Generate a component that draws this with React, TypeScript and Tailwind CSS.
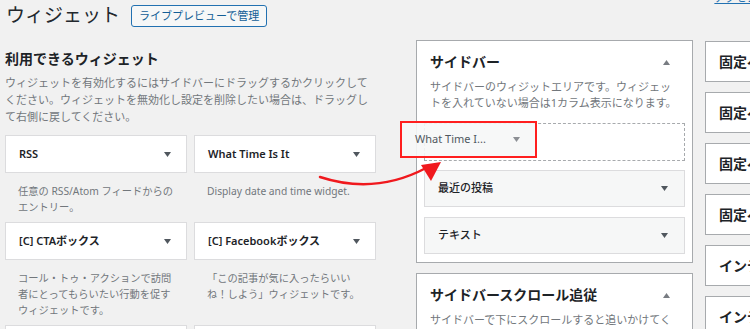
import type { ReactNode } from 'react';

const available = [
  { title: 'RSS', desc: '任意の RSS/Atom フィードからのエントリー。' },
  { title: 'What Time Is It', desc: 'Display date and time widget.' },
  { title: '[C] CTAボックス', desc: 'コール・トゥ・アクションで訪問者にとってもらいたい行動を促すウィジェットです。' },
  { title: '[C] Facebookボックス', desc: '「この記事が気に入ったらいいね！しよう」ウィジェットです。' },
  { title: '[C] PR表記', desc: '' },
  { title: '[C] SNSフォローボタン', desc: '' },
];

const areas = ['固定ページ上部', '固定ページ本文上', '固定ページ本文中', '固定ページ本文下', 'インデックスリストトップ', 'インデックスリスト中間'];

function Down({ color = '#50575e' }: { color?: string }) {
  return (
    <svg width="7" height="5" viewBox="0 0 7 5" className="shrink-0">
      <polygon points="0,0 7,0 3.5,5" fill={color} />
    </svg>
  );
}

function Up() {
  return (
    <svg width="7" height="5" viewBox="0 0 7 5" className="shrink-0">
      <polygon points="0,5 7,5 3.5,0" fill="#787c82" />
    </svg>
  );
}

function Panel({ title, desc, children }: { title: string; desc: string; children?: ReactNode }) {
  return (
    <div className="bg-white border border-[#a7aaad]">
      <div className="flex items-center justify-between pt-[11px] pl-[13px] pr-[22px]">
        <h3 className="text-[14px] leading-5 font-bold text-[#1d2327]">{title}</h3>
        <Up />
      </div>
      <p className="mt-[7px] pl-[13px] pr-[12px] text-[11px] leading-4 text-[#72777c]">{desc}</p>
      {children}
    </div>
  );
}

export default function App() {
  return (
    <div className="relative w-[750px] h-[329px] overflow-hidden bg-[#f1f1f1] font-['Noto_Sans','Noto_Sans_CJK_JP',sans-serif] text-[#1d2327]">
      <div className="flex h-10 items-start pl-[6px]">
        <h1 className="mt-[3px] shrink-0 whitespace-nowrap text-[19px] leading-6 text-[#23282d]">ウィジェット</h1>
        <button className="ml-[11px] mt-[5px] h-[22px] px-[7px] shrink-0 rounded-[3px] border border-[#2271b1] bg-[#f6f7f7] text-[11px] leading-5 text-[#135e96]">
          ライブプレビューで管理
        </button>
        <a className="ml-[447px] -mt-[9px] shrink-0 whitespace-nowrap text-[11px] leading-[14px] text-[#2271b1] underline">
          アクセシビリティモードを有効にする
        </a>
      </div>

      <div className="flex">
        <div className="ml-[5px] w-[371px] shrink-0">
          <h2 className="mt-[9px] text-[14px] leading-5 font-bold text-[#1d2327]">利用できるウィジェット</h2>
          <p className="mt-[5px] text-[11px] leading-[17px] text-[#72777c]">
            ウィジェットを有効化するにはサイドバーにドラッグするかクリックしてください。ウィジェットを無効化し設定を削除したい場合は、ドラッグして右側に戻してください。
          </p>
          <div className="mt-[10px] grid grid-cols-2 gap-x-[7px] gap-y-[7px]">
            {available.map((w) => (
              <div key={w.title}>
                <div className="flex h-[38px] items-center justify-between border border-[#dcdcde] bg-white pl-[13px] pr-[15px]">
                  <span className="text-[11px] font-semibold text-[#1d2327]">{w.title}</span>
                  <Down />
                </div>
                <p className="pt-[10px] pl-[13px] pr-[10px] text-[10.25px] leading-4 text-[#72777c]">{w.desc}</p>
              </div>
            ))}
          </div>
        </div>

        <div className="ml-[40px] w-[277px] shrink-0 flex flex-col gap-[10px]">
          <Panel title="サイドバー" desc="サイドバーのウィジットエリアです。ウィジェットを入れていない場合は1カラム表示になります。">
            <div className="mx-[7px] mt-[12px] h-[38px] border border-dashed border-[#a7aaad]" />
            <div className="mx-[7px] mt-[9px] flex h-[37px] items-center justify-between border border-[#dcdcde] bg-[#f6f7f7] pl-[13px] pr-[16px]">
              <span className="text-[11px] font-medium">最近の投稿</span>
              <Down />
            </div>
            <div className="mx-[7px] mt-[10px] mb-[8px] flex h-[37px] items-center justify-between border border-[#dcdcde] bg-[#f6f7f7] pl-[13px] pr-[16px]">
              <span className="text-[11px] font-medium">テキスト</span>
              <Down />
            </div>
          </Panel>
          <Panel title="サイドバースクロール追従" desc="サイドバーで下にスクロールすると追いかけてくるエリアです。" />
        </div>

        <div className="ml-[12px] w-[250px] shrink-0 flex flex-col gap-[10px] pt-[1px]">
          {areas.map((a) => (
            <div key={a} className="flex h-[41px] items-center border border-[#a7aaad] bg-white pl-[13px]">
              <span className="whitespace-nowrap text-[14px] font-bold text-[#1d2327]">{a}</span>
            </div>
          ))}
        </div>
      </div>

      {/* dragged widget */}
      <div className="absolute left-[400px] top-[121px] w-[137px] h-[37px] border-2 border-[#ff1f1f] bg-[#f6f7f7]/90 flex items-center justify-between pl-[13px] pr-[15px]">
        <span className="text-[11px] text-[#50575e]">What Time I...</span>
        <Down color="#8c8f94" />
      </div>

      <svg className="pointer-events-none absolute left-0 top-0" width="750" height="329" viewBox="0 0 750 329">
        <path d="M320 177 Q375 195 426 168" fill="none" stroke="#f0191e" strokeWidth="2.5" strokeLinecap="round" />
        <polygon points="441,162 421,165 431,181" fill="#f0191e" />
      </svg>
    </div>
  );
}
